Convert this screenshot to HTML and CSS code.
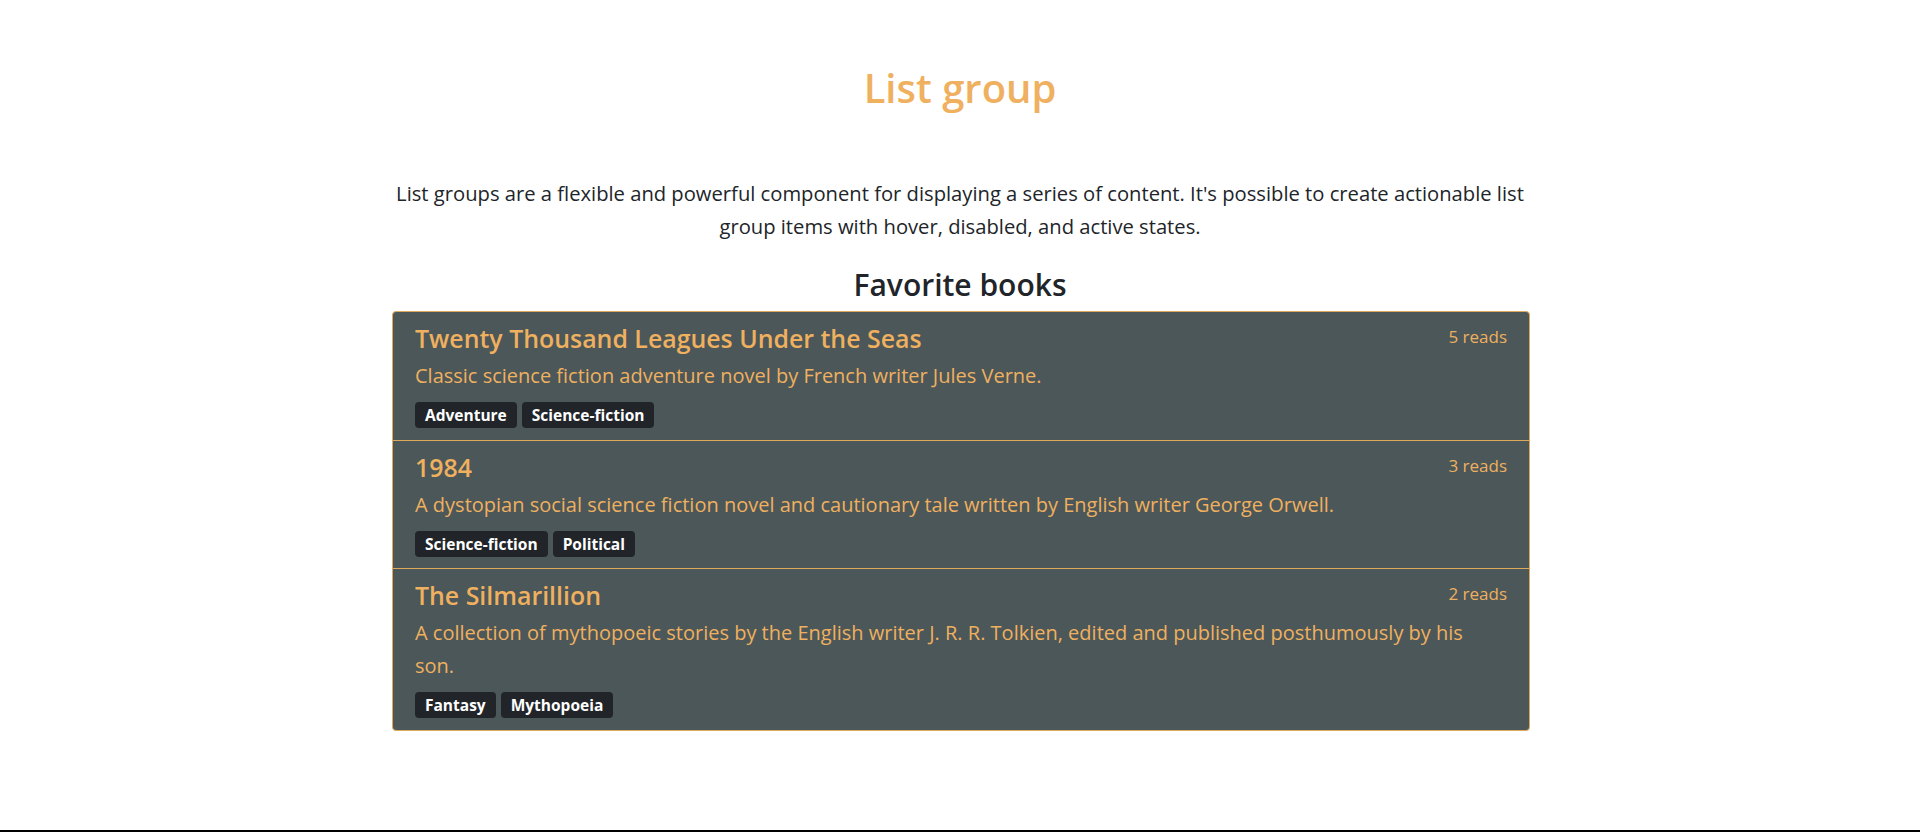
FILE: index.html
```html
<!DOCTYPE html>
<html lang="en">
<head>
<meta charset="utf-8">
<title>List group</title>
<link rel="stylesheet" href="styles.css">
</head>
<body>
<main class="page">
  <div class="container">
    <h1 class="page-title">List group</h1>
    <p class="lead">List groups are a flexible and powerful component for displaying a series of content. It's possible to create actionable list group items with hover, disabled, and active states.</p>
    <h3 class="section-title">Favorite books</h3>
    <div class="list-group">
      <div class="list-item">
        <div class="item-head">
          <h5 class="item-title">Twenty Thousand Leagues Under the Seas</h5>
          <small class="reads">5 reads</small>
        </div>
        <p class="item-desc">Classic science fiction adventure novel by French writer Jules Verne.</p>
        <div class="tags">
          <span class="badge">Adventure</span>
          <span class="badge">Science-fiction</span>
        </div>
      </div>
      <div class="list-item">
        <div class="item-head">
          <h5 class="item-title">1984</h5>
          <small class="reads">3 reads</small>
        </div>
        <p class="item-desc">A dystopian social science fiction novel and cautionary tale written by English writer George Orwell.</p>
        <div class="tags">
          <span class="badge">Science-fiction</span>
          <span class="badge">Political</span>
        </div>
      </div>
      <div class="list-item">
        <div class="item-head">
          <h5 class="item-title">The Silmarillion</h5>
          <small class="reads">2 reads</small>
        </div>
        <p class="item-desc">A collection of mythopoeic stories by the English writer J. R. R. Tolkien, edited and published posthumously by his son.</p>
        <div class="tags">
          <span class="badge">Fantasy</span>
          <span class="badge">Mythopoeia</span>
        </div>
      </div>
    </div>
  </div>
</main>
<footer class="footer-line"></footer>
</body>
</html>
```

FILE: styles.css
```css
* {
  box-sizing: border-box;
}

html, body {
  margin: 0;
  padding: 0;
}

body {
  background: #ffffff;
  color: #212529;
  font-family: "Open Sans", "Noto Sans", sans-serif;
  min-height: 100vh;
  display: flex;
  flex-direction: column;
}

.page {
  flex: 1;
}

.container {
  width: 1140px;
  margin: 0 auto;
  display: flex;
  flex-direction: column;
  align-items: center;
}

.page-title {
  margin: 64px 0 0;
  font-size: 40px;
  line-height: 48px;
  font-weight: 600;
  color: #efb05f;
}

.lead {
  margin: 65px 0 0;
  font-size: 20.2px;
  line-height: 33px;
  text-align: center;
  color: #212529;
}

.section-title {
  margin: 24px 0 0;
  font-size: 30px;
  line-height: 36px;
  font-weight: 600;
  color: #212529;
}

.list-group {
  margin-top: 8px;
  width: calc(100% - 2px);
  align-self: flex-end;
  display: flex;
  flex-direction: column;
  background: #4b5759;
  border: 1px solid #dfa95c;
  border-radius: 4px;
}

.list-item {
  padding: 14px 22px 11.5px;
  border-top: 1px solid #dfa95c;
  color: #efb05f;
}

.list-item:first-child {
  border-top: 0;
}

.item-head {
  display: flex;
  justify-content: space-between;
  align-items: flex-start;
}

.item-title {
  margin: 0;
  font-size: 24.9px;
  line-height: 25px;
  font-weight: 600;
}

.reads {
  font-size: 17px;
  line-height: 22px;
}

.item-desc {
  margin: 8px 0 0;
  font-size: 20px;
  line-height: 33px;
}

.tags {
  margin-top: 10px;
  display: flex;
  gap: 5px;
}

.badge {
  display: inline-flex;
  align-items: center;
  height: 26px;
  padding: 0 10px;
  background: #212529;
  color: #ffffff;
  font-size: 15.5px;
  font-weight: 700;
  border-radius: 4px;
}

.footer-line {
  height: 2px;
  background: #000000;
}
```
